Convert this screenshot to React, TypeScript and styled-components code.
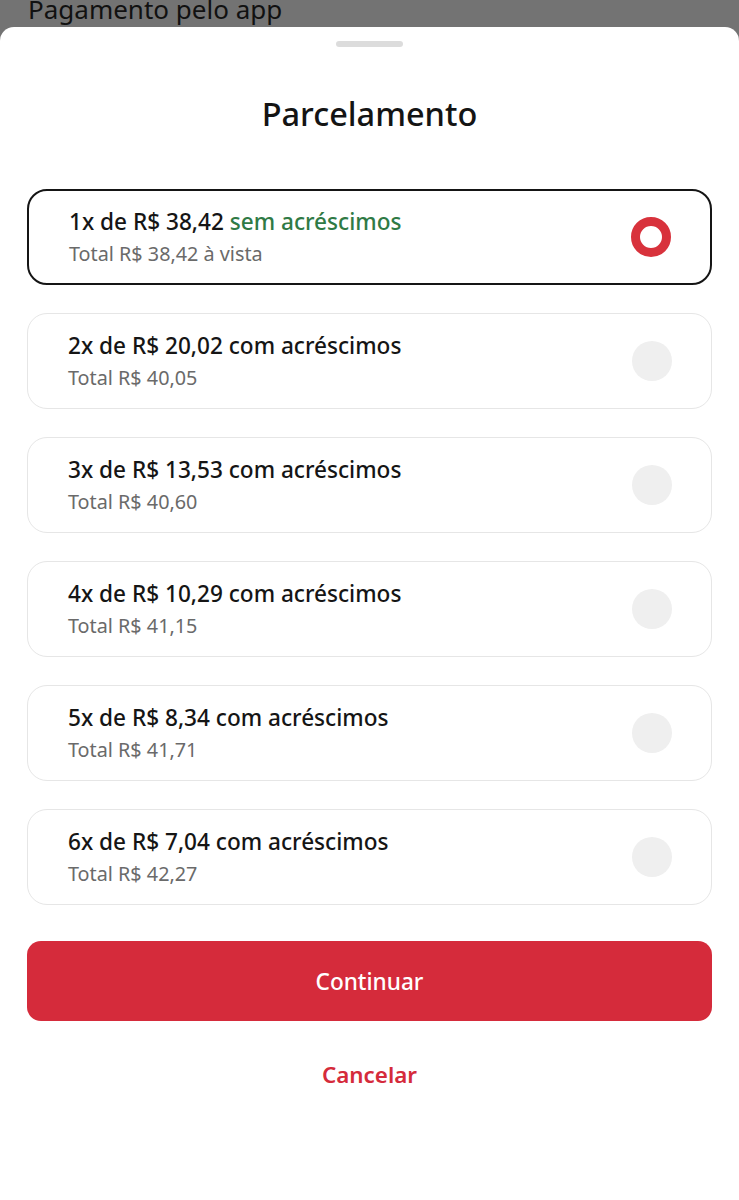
import styled, { createGlobalStyle } from 'styled-components';

const GlobalStyle = createGlobalStyle`
  html, body {
    margin: 0;
    padding: 0;
    background: #737373;
  }
  body {
    font-family: 'Noto Sans', 'Open Sans', sans-serif;
    -webkit-font-smoothing: antialiased;
  }
`;

const Screen = styled.div`
  width: 739px;
  height: 1200px;
  overflow: hidden;
  background: #737373;
  display: flex;
  flex-direction: column;
`;

const Backdrop = styled.div`
  height: 27px;
  padding-left: 28px;
  display: flex;
  align-items: flex-end;
  overflow: hidden;
`;

const BackdropTitle = styled.span`
  font-size: 26px;
  line-height: 34px;
  color: #111;
  margin-bottom: 1px;
`;

const Sheet = styled.div`
  flex: 1;
  background: #fff;
  border-radius: 14px 14px 0 0;
  padding: 14px 27px 0;
  display: flex;
  flex-direction: column;
`;

const Handle = styled.div`
  align-self: center;
  width: 67px;
  height: 6px;
  border-radius: 3px;
  background: #dcdcdc;
`;

const Title = styled.h1`
  margin: 48px 0 56px;
  text-align: center;
  font-size: 32.5px;
  font-weight: 500;
  line-height: 38px;
  color: #141414;
`;

const List = styled.div`
  display: flex;
  flex-direction: column;
  gap: 28px;
`;

const Card = styled.div<{ $selected?: boolean }>`
  height: 96px;
  box-sizing: border-box;
  border-radius: 20px;
  border: ${(p) => (p.$selected ? '2px solid #151515' : '1.5px solid #e6e6e6')};
  padding: 0 39px 0 40px;
  display: flex;
  align-items: center;
  justify-content: space-between;
`;

const Texts = styled.div`
  display: flex;
  flex-direction: column;
  gap: 6px;
`;

const Main = styled.div`
  font-size: 22.6px;
  font-weight: 500;
  color: #151515;
  line-height: 28px;
`;

const Accent = styled.span`
  color: #2f7a45;
`;

const Sub = styled.div`
  font-size: 19.8px;
  color: #6a6a6a;
  line-height: 24px;
`;

const Radio = styled.div<{ $checked?: boolean }>`
  width: 40px;
  height: 40px;
  box-sizing: border-box;
  border-radius: 50%;
  flex-shrink: 0;
  background: ${(p) => (p.$checked ? '#fff' : '#efefef')};
  border: ${(p) => (p.$checked ? '9.5px solid #d8323c' : 'none')};
`;

const PrimaryButton = styled.button`
  margin-top: 36px;
  height: 80px;
  border: none;
  border-radius: 14px;
  background: #d52b3b;
  color: #fff;
  font-family: inherit;
  font-size: 22.6px;
  font-weight: 500;
`;

const LinkButton = styled.button`
  margin-top: 39px;
  align-self: center;
  border: none;
  background: none;
  color: #d52b3b;
  font-family: inherit;
  font-size: 22.4px;
  font-weight: 600;
  line-height: 28px;
`;

const options = [
  { n: 1, value: '38,42', total: '38,42 à vista', free: true },
  { n: 2, value: '20,02', total: '40,05' },
  { n: 3, value: '13,53', total: '40,60' },
  { n: 4, value: '10,29', total: '41,15' },
  { n: 5, value: '8,34', total: '41,71' },
  { n: 6, value: '7,04', total: '42,27' },
];

export default function App() {
  return (
    <Screen>
      <GlobalStyle />
      <Backdrop>
        <BackdropTitle>Pagamento pelo app</BackdropTitle>
      </Backdrop>
      <Sheet>
        <Handle />
        <Title>Parcelamento</Title>
        <List>
          {options.map((o) => (
            <Card key={o.n} $selected={o.free}>
              <Texts>
                <Main>
                  {o.n}x de R$ {o.value}{' '}
                  {o.free ? <Accent>sem acréscimos</Accent> : 'com acréscimos'}
                </Main>
                <Sub>Total R$ {o.total}</Sub>
              </Texts>
              <Radio $checked={o.free} />
            </Card>
          ))}
        </List>
        <PrimaryButton>Continuar</PrimaryButton>
        <LinkButton>Cancelar</LinkButton>
      </Sheet>
    </Screen>
  );
}
